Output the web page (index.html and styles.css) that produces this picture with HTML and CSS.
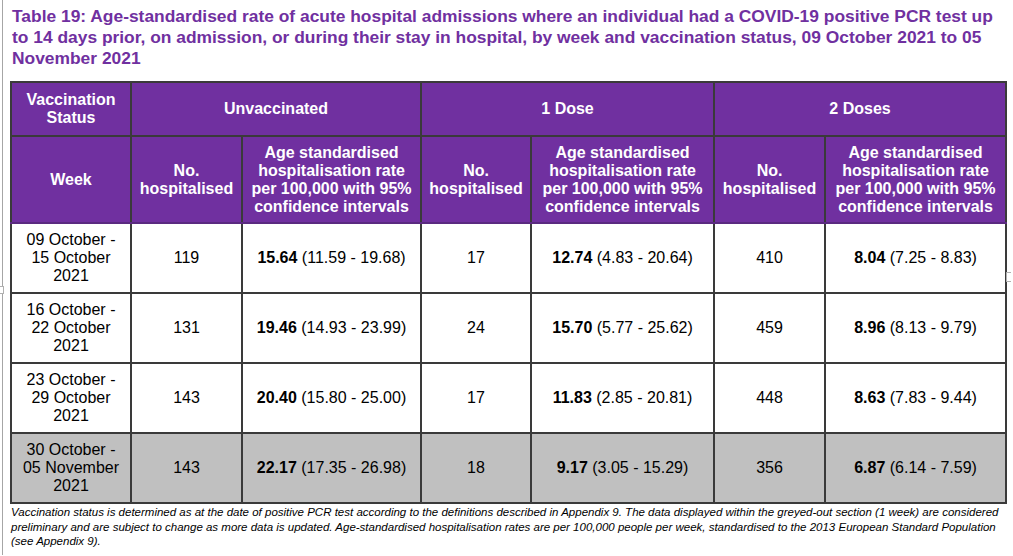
FILE: index.html
```html
<!DOCTYPE html>
<html lang="en">
<head>
<meta charset="utf-8">
<title>Table 19</title>
<link rel="stylesheet" href="styles.css">
</head>
<body>
<div class="page">
  <span class="tick tick-left"></span>
  <span class="tick tick-right"></span>
  <h1 class="title">Table 19: Age-standardised rate of acute hospital admissions where an individual had a COVID-19 positive PCR test up to 14 days prior, on admission, or during their stay in hospital, by week and vaccination status, 09 October 2021 to 05 November 2021</h1>
  <table class="data">
    <colgroup>
      <col class="c-week"><col class="c-no"><col class="c-rate1"><col class="c-no2"><col class="c-rate2"><col class="c-no3"><col class="c-rate3">
    </colgroup>
    <thead>
      <tr class="h1">
        <th>Vaccination<br>Status</th>
        <th colspan="2">Unvaccinated</th>
        <th colspan="2">1 Dose</th>
        <th colspan="2">2 Doses</th>
      </tr>
      <tr class="h2">
        <th>Week</th>
        <th>No.<br>hospitalised</th>
        <th class="rate">Age standardised<br>hospitalisation rate<br>per 100,000 with 95%<br>confidence intervals</th>
        <th>No.<br>hospitalised</th>
        <th class="rate">Age standardised<br>hospitalisation rate<br>per 100,000 with 95%<br>confidence intervals</th>
        <th>No.<br>hospitalised</th>
        <th class="rate">Age standardised<br>hospitalisation rate<br>per 100,000 with 95%<br>confidence intervals</th>
      </tr>
    </thead>
    <tbody>
      <tr>
        <td>09 October -<br>15 October<br>2021</td>
        <td>119</td><td><b>15.64</b> (11.59 - 19.68)</td>
        <td>17</td><td><b>12.74</b> (4.83 - 20.64)</td>
        <td>410</td><td><b>8.04</b> (7.25 - 8.83)</td>
      </tr>
      <tr>
        <td>16 October -<br>22 October<br>2021</td>
        <td>131</td><td><b>19.46</b> (14.93 - 23.99)</td>
        <td>24</td><td><b>15.70</b> (5.77 - 25.62)</td>
        <td>459</td><td><b>8.96</b> (8.13 - 9.79)</td>
      </tr>
      <tr>
        <td>23 October -<br>29 October<br>2021</td>
        <td>143</td><td><b>20.40</b> (15.80 - 25.00)</td>
        <td>17</td><td><b>11.83</b> (2.85 - 20.81)</td>
        <td>448</td><td><b>8.63</b> (7.83 - 9.44)</td>
      </tr>
      <tr class="grey">
        <td>30 October -<br>05 November<br>2021</td>
        <td>143</td><td><b>22.17</b> (17.35 - 26.98)</td>
        <td>18</td><td><b>9.17</b> (3.05 - 15.29)</td>
        <td>356</td><td><b>6.87</b> (6.14 - 7.59)</td>
      </tr>
    </tbody>
  </table>
  <p class="note">Vaccination status is determined as at the date of positive PCR test according to the definitions described in Appendix 9. The data displayed within the greyed-out section (1 week) are considered preliminary and are subject to change as more data is updated. Age-standardised hospitalisation rates are per 100,000 people per week, standardised to the 2013 European Standard Population (see Appendix 9).</p>
</div>
</body>
</html>
```

FILE: styles.css
```css
html, body {
  margin: 0;
  padding: 0;
  background: #fff;
}
body {
  font-family: "Liberation Sans", Arial, sans-serif;
  color: #000;
}
.page {
  position: relative;
  margin-left: 2px;
  border-left: 1px solid #a6a6a6;
  padding: 6px 0 6px 7px;
  width: 1000px;
  min-height: 548px;
  box-sizing: border-box;
}
.tick {
  position: absolute;
  width: 4px;
  height: 6px;
  border: 1px solid #b0b0b0;
  background: #fff;
}
.tick-left { left: -4px; top: 286px; border-left: none; }
.tick-right { left: 1003px; top: 272px; border-right: none; height: 8px; }
.title {
  margin: 0 0 12px 2px;
  color: #7030a0;
  font-size: 17.4px;
  line-height: 21px;
  font-weight: bold;
}
.data {
  border-collapse: collapse;
  table-layout: fixed;
  width: 995px;
  font-size: 16px;
  line-height: 18px;
}
.c-week { width: 120px; }
.c-no { width: 111px; }
.c-rate1 { width: 179px; }
.c-no2 { width: 110px; }
.c-rate2 { width: 183px; }
.c-no3 { width: 111px; }
.c-rate3 { width: 181px; }
.data th, .data td {
  border: 2px solid #3a3a3a;
  text-align: center;
  vertical-align: middle;
  padding: 0 2px;
}
.data th {
  background: #7030a0;
  color: #fff;
  font-weight: bold;
}
.data th.rate {
  white-space: nowrap;
  padding: 0;
}
.data thead tr.h2 th {
  border-bottom-color: #5a2a80;
}
.h1 { height: 54px; }
.h2 { height: 87px; }
.data tbody tr { height: 70px; }
.data tbody tr.grey td { background: #c0c0c0; }
.note {
  margin: 1px 0 0 1px;
  font-size: 11.5px;
  line-height: 14.5px;
  font-style: italic;
  color: #000;
}
```
